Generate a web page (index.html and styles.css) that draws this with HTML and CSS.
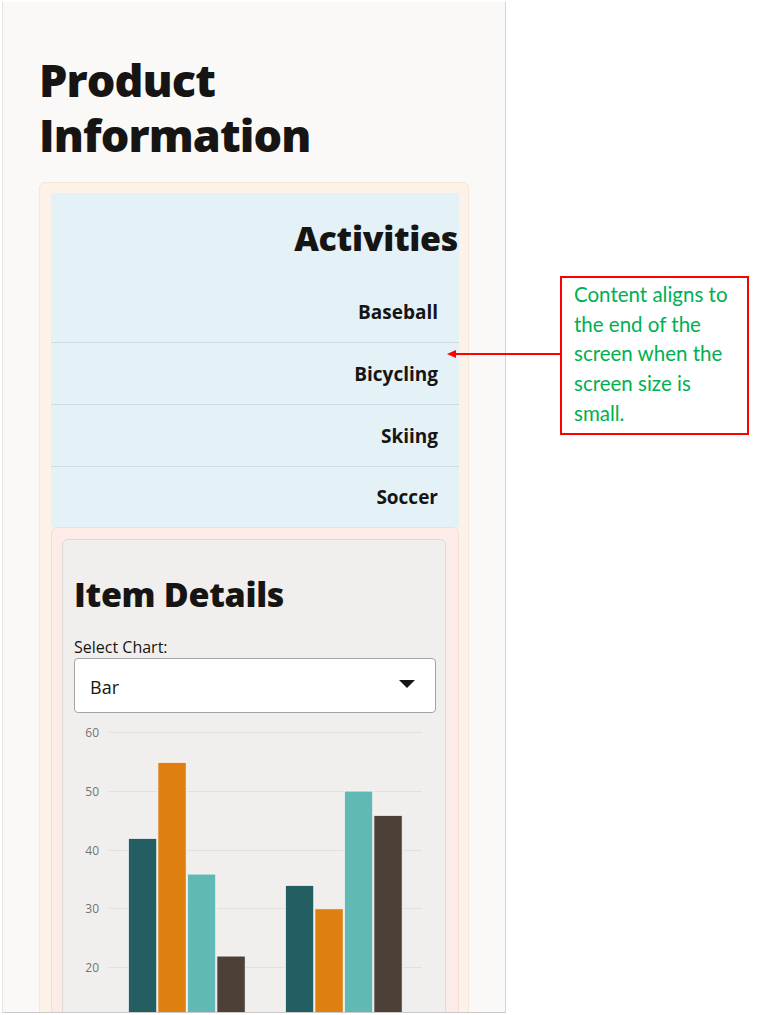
FILE: index.html
```html
<!DOCTYPE html>
<html lang="en">
<head>
<meta charset="utf-8">
<title>Product Information</title>
<link rel="stylesheet" href="styles.css">
</head>
<body>
<div class="page">
  <main class="panel">
    <h1 class="title">Product Information</h1>
    <section class="outer">
      <div class="activities">
        <h2 class="act-title">Activities</h2>
        <ul class="act-list">
          <li class="act-item">Baseball</li>
          <li class="act-item">Bicycling</li>
          <li class="act-item">Skiing</li>
          <li class="act-item">Soccer</li>
        </ul>
      </div>
      <div class="details-wrap">
        <div class="details">
          <h2 class="details-title">Item Details</h2>
          <label class="select-label">Select Chart:</label>
          <div class="select">
            <span class="select-value">Bar</span>
            <svg class="select-arrow" width="16" height="8" viewBox="0 0 16 8"><path d="M0 0H16L8 8Z" fill="#161513"/></svg>
          </div>
          <svg class="chart" width="361" height="300" viewBox="0 0 361 300">
            <g class="grid" stroke="#e1e0df" stroke-width="1">
              <line x1="35" x2="348" y1="16.5" y2="16.5"/>
              <line x1="35" x2="348" y1="75.5" y2="75.5"/>
              <line x1="35" x2="348" y1="134.5" y2="134.5"/>
              <line x1="35" x2="348" y1="192.5" y2="192.5"/>
              <line x1="35" x2="348" y1="251.5" y2="251.5"/>
            </g>
            <g class="labels" font-family="'Open Sans', sans-serif" font-size="12" fill="#737373" text-anchor="end">
              <text x="25" y="21">60</text>
              <text x="25" y="80">50</text>
              <text x="25" y="139">40</text>
              <text x="25" y="197">30</text>
              <text x="25" y="256">20</text>
            </g>
            <g stroke="#f7f6f5" stroke-width="1">
              <rect x="54.3" y="122.3" width="28.5" height="300" fill="#235e63"/>
              <rect x="83.8" y="46.3" width="28.5" height="400" fill="#de7f0f"/>
              <rect x="113.3" y="158" width="28.5" height="300" fill="#60b9b5"/>
              <rect x="142.8" y="240" width="28.5" height="300" fill="#4d4037"/>
              <rect x="211.3" y="169.3" width="28.5" height="300" fill="#235e63"/>
              <rect x="240.8" y="192.7" width="28.5" height="300" fill="#de7f0f"/>
              <rect x="270.3" y="75" width="28.5" height="300" fill="#60b9b5"/>
              <rect x="299.8" y="99.3" width="28.5" height="300" fill="#4d4037"/>
            </g>
          </svg>
        </div>
      </div>
    </section>
  </main>
  <svg class="callout-arrow" width="116" height="14" viewBox="0 0 116 14">
    <line x1="8" y1="7" x2="116" y2="7" stroke="#ff0000" stroke-width="2"/>
    <path d="M2 7L11 3V11Z" fill="#ff0000"/>
  </svg>
  <aside class="callout">Content aligns to the end of the screen when the screen size is small.</aside>
</div>
</body>
</html>
```
FILE: styles.css
```css
* { box-sizing: border-box; }
html, body { margin: 0; padding: 0; background: #ffffff; }
body { font-family: "Open Sans", "Noto Sans", sans-serif; color: #161513; }
.page { position: relative; width: 772px; height: 1015px; overflow: hidden; }

.panel {
  margin: 2px 0 0 2px;
  width: 504px;
  height: 1011px;
  background: #faf9f8;
  border-left: 1px solid #e6e4e2;
  border-right: 1px solid #d6d5d3;
  border-bottom: 1px solid #cbcac8;
  padding: 50px 36px 0 36px;
  overflow: hidden;
}

.title {
  margin: 0;
  font-size: 45px;
  line-height: 55px;
  font-weight: 800;
  letter-spacing: -0.9px;
}

.outer {
  margin-top: 20px;
  background: #fdf2e8;
  border: 1px solid #f4e7db;
  border-radius: 6px;
  padding: 10px 9px 0 11px;
}

.activities { background: #e4f1f7; padding-bottom: 1px; }
.act-title {
  margin: 0;
  padding: 25px 1px 23px 0;
  text-align: right;
  font-size: 34px;
  line-height: 40px;
  font-weight: 800;
  letter-spacing: -0.3px;
}
.act-list { list-style: none; margin: 0; padding: 0; }
.act-item {
  height: 62px;
  display: flex;
  align-items: center;
  justify-content: flex-end;
  padding-right: 21px;
  font-size: 19px;
  font-weight: 700;
  border-bottom: 1px solid #cfdbe1;
}
.act-item:last-child { border-bottom: none; height: 59px; }

.details-wrap {
  background: #fdebe8;
  border: 1px solid #f6dcd8;
  border-radius: 6px 6px 0 0;
  padding: 11px 12px 0 10px;
  height: 600px;
}
.details {
  background: #f1efed;
  border: 1px solid #dddad7;
  border-radius: 6px;
  padding: 34px 9px 0 11px;
  height: 600px;
}
.details-title {
  margin: 0;
  font-size: 34px;
  line-height: 40px;
  font-weight: 800;
  letter-spacing: -0.3px;
}
.select-label {
  display: block;
  margin-top: 23px;
  font-size: 16px;
  line-height: 20px;
  color: #161513;
}
.select {
  margin-top: 1px;
  height: 55px;
  background: #ffffff;
  border: 1px solid #a7a5a3;
  border-radius: 4px;
  display: flex;
  align-items: center;
  justify-content: space-between;
  padding: 0 20px 0 15px;
}
.select-value { font-size: 18px; color: #161513; margin-top: 2px; }
.select-arrow { display: block; margin-top: -4px; }
.chart { display: block; margin-top: 3px; }

.callout {
  position: absolute;
  left: 560px;
  top: 276px;
  width: 189px;
  height: 159px;
  border: 2px solid #ff0000;
  background: #ffffff;
  padding: 2px 10px 0 12px;
  font-family: Lato, "Open Sans", sans-serif;
  font-size: 20.5px;
  line-height: 29.7px;
  color: #00b050;
}
.callout-arrow { position: absolute; left: 445px; top: 347px; }
```
